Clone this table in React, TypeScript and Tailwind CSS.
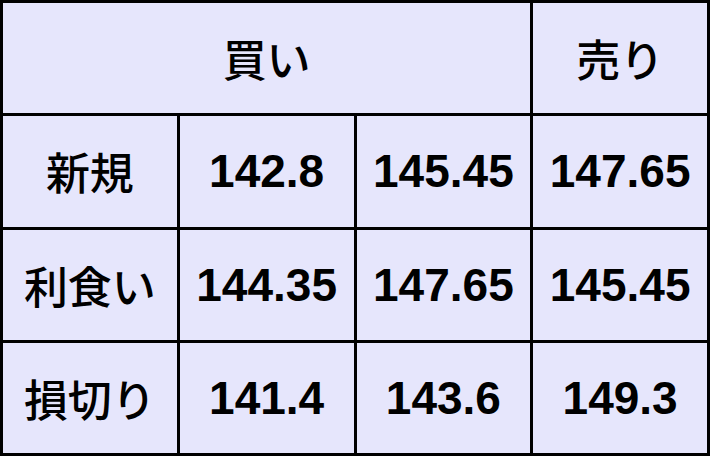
import { Fragment } from 'react';

const rows = [
  { label: '新規', values: ['142.8', '145.45', '147.65'] },
  { label: '利食い', values: ['144.35', '147.65', '145.45'] },
  { label: '損切り', values: ['141.4', '143.6', '149.3'] },
];

const cell = 'flex items-center justify-center bg-[#e6e6fc]';
const jp = "font-['Noto_Sans_CJK_JP',sans-serif] font-medium text-[44px] leading-none";
const num = "font-['Liberation_Sans',Arial,sans-serif] font-bold text-[46px] leading-none";

export default function App() {
  return (
    <div className="w-[711px] h-[457px] bg-white">
      <div className="grid grid-cols-4 grid-rows-4 gap-[3px] p-[3px] w-[710px] h-[456px] bg-black text-black">
        <div className={`${cell} col-span-3`}>
          <span className={jp}>買い</span>
        </div>
        <div className={cell}>
          <span className={jp}>売り</span>
        </div>
        {rows.map((row) => (
          <Fragment key={row.label}>
            <div className={cell}>
              <span className={jp}>{row.label}</span>
            </div>
            {row.values.map((v, i) => (
              <div key={i} className={cell}>
                <span className={num}>{v}</span>
              </div>
            ))}
          </Fragment>
        ))}
      </div>
    </div>
  );
}
